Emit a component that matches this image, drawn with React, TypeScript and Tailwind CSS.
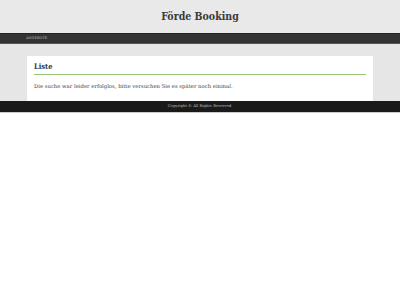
import React from "react";

export default function App() {
  const serif = { fontFamily: '"DejaVu Serif", "Liberation Serif", serif' };
  const cond = { fontFamily: '"DejaVu Serif Condensed", "DejaVu Serif", serif' };
  return (
    <div className="w-[400px] min-h-[300px] bg-white" style={serif}>
      <header className="h-[33px] bg-[#e9e9e9] flex items-center justify-center">
        <h1 className="text-[10.5px] font-bold text-[#3a3a3a]" style={cond}>Förde Booking</h1>
      </header>
      <nav className="h-[9px] bg-[#333] border-t border-[#222] border-b border-b-[#555] flex items-center px-[26px] box-content">
        <span className="text-[3.5px] text-[#bbb] uppercase leading-none">Angebote</span>
      </nav>
      <main className="bg-[#e6e6e6] pt-[12px] px-[27px]">
        <div className="bg-white px-[7px] pt-[6px] pb-[11px]">
          <h2 className="text-[7.5px] font-bold text-[#333] pb-[3px] leading-tight" style={cond}>Liste</h2>
          <div className="h-[1px] bg-[#9cc47a]" />
          <p className="text-[5.3px] text-[#444] mt-[9px] leading-none">
            Die suche war leider erfolglos, bitte versuchen Sie es später noch einmal.
          </p>
        </div>
      </main>
      <footer className="h-[12px] bg-[#1a1a1a] border-b border-[#ccc] flex items-center justify-center">
        <span className="text-[3.8px] text-[#bbb] leading-none">Copyright © All Rights Reserved.</span>
      </footer>
    </div>
  );
}
